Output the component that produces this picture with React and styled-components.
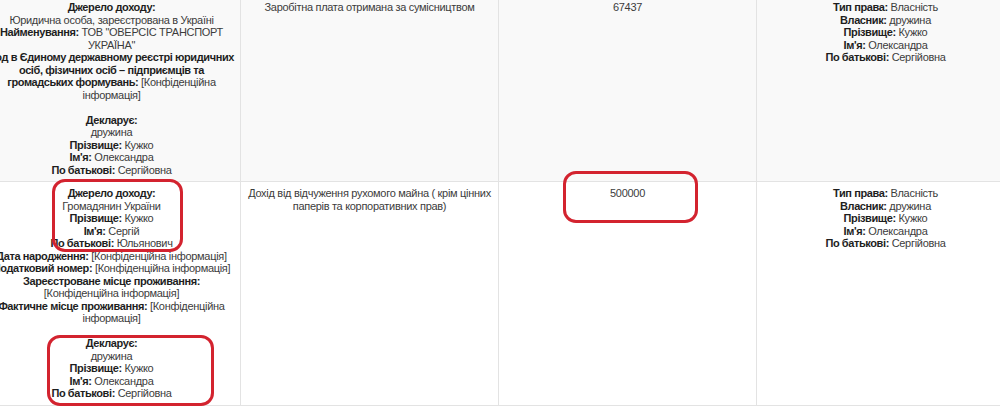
import React from 'react';
import styled, { createGlobalStyle } from 'styled-components';

const GlobalStyle = createGlobalStyle`
  body {
    margin: 0;
    background: #fff;
    font-family: "Liberation Sans", Arial, sans-serif;
  }
`;

const Page = styled.div`
  position: relative;
  width: 1000px;
  height: 406px;
  overflow: hidden;
`;

const Table = styled.table`
  border-collapse: collapse;
  table-layout: fixed;
  width: 1033px;
  margin: -5px 0 0 -18px;
`;

const Row = styled.tr`
  background: ${(p) => (p.$shade ? '#f9f9f9' : '#fff')};
`;

const Cell = styled.td`
  border: 1px solid #e3e3e3;
  padding: 5px;
  vertical-align: top;
  text-align: center;
  font-size: 11px;
  line-height: 12.5px;
  letter-spacing: -0.3px;
  color: #3c3c3c;
  height: ${(p) => p.$h || 'auto'};
`;

const Label = styled.b`
  color: #1e1e1e;
  letter-spacing: -0.4px;
`;

const Mark = styled.div`
  position: absolute;
  left: ${(p) => p.$x}px;
  top: ${(p) => p.$y}px;
  width: ${(p) => p.$w}px;
  height: ${(p) => p.$h}px;
  box-sizing: border-box;
  border: 3px solid #d3232f;
  border-radius: 13px;
  pointer-events: none;
`;

const Line = ({ label, children }) => (
  <>
    {label && <Label>{label}</Label>}
    {label && children ? ' ' : null}
    {children}
    <br />
  </>
);

const Spouse = () => (
  <>
    <Line label="Декларує:" />
    <Line>дружина</Line>
    <Line label="Прізвище:">Кужко</Line>
    <Line label="Ім'я:">Олександра</Line>
    <Label>По батькові:</Label> Сергійовна
  </>
);

const Owner = () => (
  <>
    <Line label="Тип права:">Власність</Line>
    <Line label="Власник:">дружина</Line>
    <Line label="Прізвище:">Кужко</Line>
    <Line label="Ім'я:">Олександра</Line>
    <Label>По батькові:</Label> Сергійовна
  </>
);

const App = () => {
  return (
    <Page>
      <GlobalStyle />
      <Table>
        <colgroup>
          <col style={{ width: 258 }} />
          <col style={{ width: 258 }} />
          <col style={{ width: 258 }} />
          <col style={{ width: 258 }} />
        </colgroup>
        <tbody>
          <Row $shade>
            <Cell>
              <Line label="Джерело доходу:" />
              <Line>Юридична особа, зареєстрована в Україні</Line>
              <Line label="Найменування:">ТОВ "ОВЕРСІС ТРАНСПОРТ УКРАЇНА"</Line>
              <Line label="Код в Єдиному державному реєстрі юридичних осіб, фізичних осіб – підприємців та громадських формувань:">
                [Конфіденційна інформація]
              </Line>
              <br />
              <Spouse />
            </Cell>
            <Cell>Заробітна плата отримана за сумісництвом</Cell>
            <Cell>67437</Cell>
            <Cell>
              <Owner />
            </Cell>
          </Row>
          <Row>
            <Cell>
              <Line label="Джерело доходу:" />
              <Line>Громадянин України</Line>
              <Line label="Прізвище:">Кужко</Line>
              <Line label="Ім'я:">Сергій</Line>
              <Line label="По батькові:">Юльянович</Line>
              <Line label="Дата народження:">[Конфіденційна інформація]</Line>
              <Line label="Податковий номер:">[Конфіденційна інформація]</Line>
              <Line label="Зареєстроване місце проживання:">[Конфіденційна інформація]</Line>
              <Line label="Фактичне місце проживання:">[Конфіденційна інформація]</Line>
              <br />
              <Spouse />
            </Cell>
            <Cell>Дохід від відчуження рухомого майна ( крім цінних паперів та корпоративних прав)</Cell>
            <Cell>500000</Cell>
            <Cell>
              <Owner />
            </Cell>
          </Row>
          <Row $shade>
            <Cell $h="20px" />
            <Cell />
            <Cell />
            <Cell />
          </Row>
        </tbody>
      </Table>
      <Mark $x={52} $y={179} $w={131} $h={73} />
      <Mark $x={47} $y={335} $w={167} $h={71} />
      <Mark $x={563} $y={171} $w={135} $h={52} />
    </Page>
  );
};

export default App;
